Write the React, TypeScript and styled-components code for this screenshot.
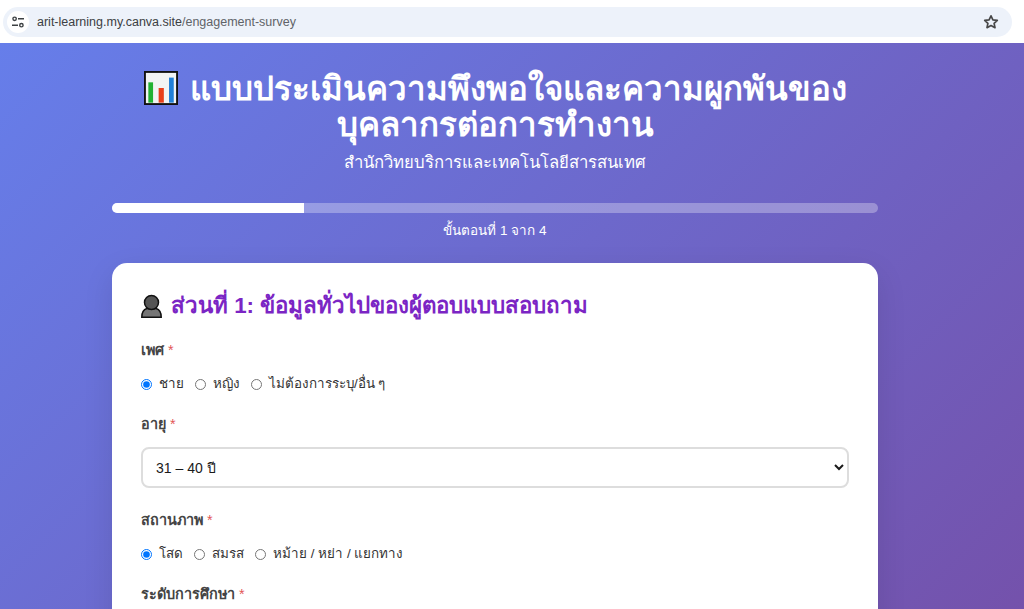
import React from 'react';
import styled, { createGlobalStyle } from 'styled-components';

const GlobalStyle = createGlobalStyle`
  html, body {
    margin: 0;
    padding: 0;
    height: 609px;
    overflow: hidden;
    background: #ffffff;
    font-family: "Liberation Sans", "Noto Sans", sans-serif;
  }
`;

const BrowserBar = styled.header`
  height: 43px;
  box-sizing: border-box;
  padding: 7px 12px 6px 3px;
  background: #ffffff;
`;

const AddressPill = styled.div`
  display: flex;
  align-items: center;
  height: 30px;
  border-radius: 15px;
  background: #edf2fa;
  font-size: 12.5px;
  color: #3c4043;
`;

const SiteInfo = styled.span`
  display: flex;
  align-items: center;
  justify-content: center;
  width: 22px;
  height: 22px;
  margin: 0 8px 0 4px;
  border-radius: 50%;
  background: #ffffff;
`;

const UrlPath = styled.span`
  color: #5f6368;
`;

const StarButton = styled.span`
  display: flex;
  margin-left: auto;
  margin-right: 13px;
`;

const Page = styled.main`
  height: 566px;
  overflow: hidden;
  box-sizing: border-box;
  padding: 28px 146px 0 112px;
  background: linear-gradient(135deg, #667eea 0%, #764ba2 100%) no-repeat;
  background-size: 100% 800px;
`;

const Title = styled.h1`
  margin: 0;
  font-size: 33px;
  line-height: 36px;
  font-weight: 700;
  color: #ffffff;
  text-align: center;
`;

const ChartEmoji = styled.svg`
  width: 34px;
  height: 34px;
  vertical-align: -5px;
  margin-right: 12px;
`;

const Subtitle = styled.p`
  margin: 9px 0 0;
  font-size: 16.7px;
  line-height: 22px;
  color: #ffffff;
  text-align: center;
`;

const ProgressTrack = styled.div`
  height: 10px;
  margin-top: 29px;
  border-radius: 5px;
  overflow: hidden;
  background: rgba(255, 255, 255, 0.3);
`;

const ProgressFill = styled.div`
  width: 25%;
  height: 100%;
  background: #ffffff;
`;

const StepLabel = styled.p`
  margin: 9px 0 0;
  font-size: 13.5px;
  line-height: 18px;
  color: #ffffff;
  text-align: center;
`;

const Card = styled.section`
  margin-top: 23px;
  padding: 28px 29px;
  border-radius: 15px;
  background: #ffffff;
  box-shadow: 0 10px 30px rgba(0, 0, 0, 0.1);
`;

const SectionTitle = styled.h2`
  display: flex;
  align-items: center;
  gap: 9px;
  margin: 0 0 19px;
  font-size: 22.3px;
  line-height: 30px;
  font-weight: 700;
  color: #7b25c4;
`;

const Field = styled.div`
  margin-bottom: 22px;
`;

const FieldLabel = styled.div`
  margin-bottom: 13px;
  font-size: 14.4px;
  line-height: 20px;
  font-weight: 700;
  color: #444444;
`;

const Required = styled.span`
  font-weight: 400;
  color: #e25555;
`;

const RadioRow = styled.div`
  display: flex;
  gap: 11px;
  padding-top: 2px;
  margin-bottom: -1px;
`;

const RadioOption = styled.label`
  display: flex;
  align-items: center;
  gap: 7px;
  font-size: 13.4px;
  line-height: 18px;
  color: #333333;
`;

const Radio = styled.input.attrs({ type: 'radio' })`
  width: 11px;
  height: 11px;
  margin: 0;
`;

const Select = styled.select`
  display: block;
  width: 100%;
  height: 41px;
  padding: 0 0 0 9px;
  border: 2px solid #dddddd;
  border-radius: 8px;
  background: #ffffff;
  font-family: inherit;
  font-size: 14px;
  color: #1a1a1a;
`;

const RadioGroup: React.FC<{ name: string; options: string[] }> = ({ name, options }) => (
  <RadioRow>
    {options.map((option, index) => (
      <RadioOption key={option}>
        <Radio name={name} defaultChecked={index === 0} />
        {option}
      </RadioOption>
    ))}
  </RadioRow>
);

const App: React.FC = () => (
  <>
    <GlobalStyle />
    <BrowserBar>
      <AddressPill>
        <SiteInfo>
          <svg width="14" height="14" viewBox="0 0 14 14" fill="none" stroke="#3c4043" strokeWidth="1.4">
            <circle cx="3.6" cy="3.8" r="1.7" />
            <path d="M7 3.8h6M1 10.2h6" />
            <circle cx="10.4" cy="10.2" r="1.7" />
          </svg>
        </SiteInfo>
        arit-learning.my.canva.site<UrlPath>/engagement-survey</UrlPath>
        <StarButton>
          <svg width="16" height="16" viewBox="0 0 16 16" fill="none" stroke="#474747" strokeWidth="1.7" strokeLinejoin="round">
            <path d="M8 1.8l1.9 4 4.4.5-3.2 3 .9 4.4L8 11.5l-4 2.2.9-4.4-3.2-3 4.4-.5z" />
          </svg>
        </StarButton>
      </AddressPill>
    </BrowserBar>
    <Page>
      <Title>
        <ChartEmoji viewBox="0 0 36 36">
          <rect x="1" y="1" width="34" height="34" fill="#f2f4f4" stroke="#111111" strokeWidth="2" />
          <rect x="4.600" y="12" width="5" height="21.500" fill="#21b233" />
          <rect x="15.500" y="18" width="5.500" height="15.500" fill="#e8401c" />
          <rect x="26.500" y="7" width="5" height="26.500" fill="#2280d8" />
        </ChartEmoji>
        แบบประเมินความพึงพอใจและความผูกพันของบุคลากรต่อการทำงาน
      </Title>
      <Subtitle>สำนักวิทยบริการและเทคโนโลยีสารสนเทศ</Subtitle>
      <ProgressTrack>
        <ProgressFill />
      </ProgressTrack>
      <StepLabel>ขั้นตอนที่ 1 จาก 4</StepLabel>
      <Card>
        <SectionTitle>
          <svg width="21" height="24" viewBox="0 0 21 24">
            <path d="M.8 23.200c0-5 1.700-7.700 5-8.700h9.400c3.300 1 5 3.700 5 8.700z" fill="#757575" stroke="#111111" strokeWidth="1.500" />
            <circle cx="10.500" cy="8.500" r="7" fill="#555555" stroke="#111111" strokeWidth="1.500" />
          </svg>
          ส่วนที่ 1: ข้อมูลทั่วไปของผู้ตอบแบบสอบถาม
        </SectionTitle>
        <Field>
          <FieldLabel>เพศ <Required>*</Required></FieldLabel>
          <RadioGroup name="gender" options={['ชาย', 'หญิง', 'ไม่ต้องการระบุ/อื่น ๆ']} />
        </Field>
        <Field>
          <FieldLabel>อายุ <Required>*</Required></FieldLabel>
          <Select defaultValue="31 – 40 ปี">
            <option>31 – 40 ปี</option>
          </Select>
        </Field>
        <Field>
          <FieldLabel>สถานภาพ <Required>*</Required></FieldLabel>
          <RadioGroup name="status" options={['โสด', 'สมรส', 'หม้าย / หย่า / แยกทาง']} />
        </Field>
        <Field>
          <FieldLabel>ระดับการศึกษา <Required>*</Required></FieldLabel>
        </Field>
      </Card>
    </Page>
  </>
);

export default App;
